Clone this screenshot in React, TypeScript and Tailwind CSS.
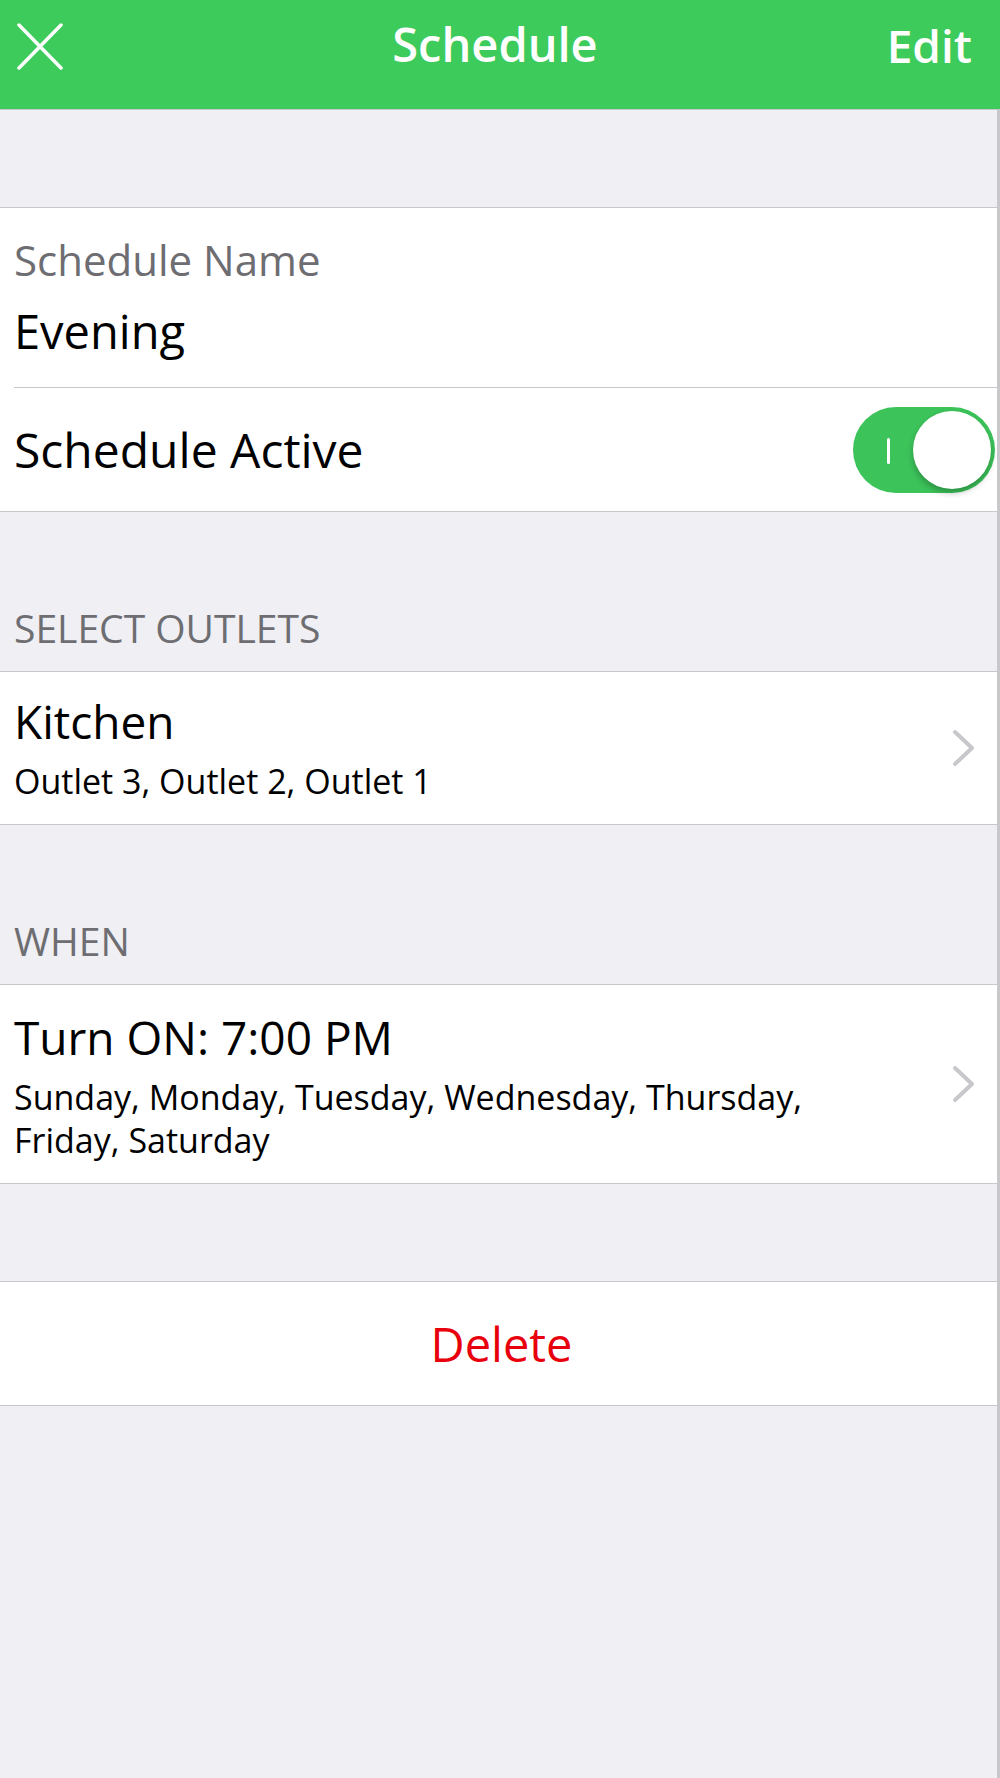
const font = { fontFamily: '"Open Sans", "Noto Sans", sans-serif' };

function Chevron() {
  return (
    <svg width="26" height="38" viewBox="0 0 26 38" className="shrink-0">
      <path d="M4 3 L21 19 L4 35" fill="none" stroke="#c7c7cc" strokeWidth="4" strokeLinecap="round" strokeLinejoin="round" />
    </svg>
  );
}

function Toggle() {
  return (
    <div className="relative h-[86px] w-[142px] rounded-full bg-[#3cc35a]">
      <span className="absolute left-[34px] top-[31px] h-[26px] w-[3px] rounded-full bg-white" />
      <span className="absolute right-[4px] top-[4px] h-[78px] w-[78px] rounded-full bg-white shadow-[0_4px_6px_rgba(0,0,0,0.25)]" />
    </div>
  );
}

function SectionHeader({ title }: { title: string }) {
  return (
    <div className="flex h-[159px] items-end px-[14px] pb-[18px]">
      <span className="text-[39px] leading-[50px] text-[#6d6d72]">{title}</span>
    </div>
  );
}

export default function App() {
  return (
    <div className="min-h-[1778px] w-[1000px] bg-[#efeff4]" style={font}>
      {/* Nav bar */}
      <header className="relative flex h-[110px] items-start border-b border-[#c8c7cc] bg-[#3dcb5c] px-[17px] pt-[17px] text-white">
        <svg width="46" height="47" viewBox="0 0 46 47" className="mt-[6px]">
          <path d="M2 2 L44 45 M44 2 L2 45" stroke="white" strokeWidth="3.5" strokeLinecap="round" />
        </svg>
        <span className="absolute left-0 right-0 top-[16px] pr-[10px] text-center text-[47px] font-semibold leading-[56px]">
          Schedule
        </span>
        <span className="ml-auto pr-[11px] text-[46px] font-semibold leading-[56px]">Edit</span>
      </header>

      <div className="min-h-[1668px] border-r-[3px] border-[#c8c8cb]">
        <div className="h-[97px]" />

        {/* Name + active */}
        <section className="border-y border-[#c8c7cc] bg-white">
          <div className="px-[14px] pb-[28px] pt-[27px]">
            <div className="text-[42px] leading-[50px] text-[#6d6d72]">Schedule Name</div>
            <div className="mt-[18px] text-[47px] leading-[56px] text-black">Evening</div>
          </div>
          <div className="ml-[14px] h-px bg-[#c8c7cc]" />
          <div className="flex h-[123px] items-center justify-between pl-[14px] pr-[2px]">
            <span className="text-[48px] leading-[56px] text-black">Schedule Active</span>
            <Toggle />
          </div>
        </section>

        <SectionHeader title="SELECT OUTLETS" />

        <section className="border-y border-[#c8c7cc] bg-white">
          <div className="flex h-[152px] items-center justify-between pl-[14px] pr-[20px]">
            <div>
              <div className="text-[46px] leading-[56px] text-black">Kitchen</div>
              <div className="mt-[10px] text-[34px] leading-[44px] text-black">Outlet 3, Outlet 2, Outlet 1</div>
            </div>
            <Chevron />
          </div>
        </section>

        <SectionHeader title="WHEN" />

        <section className="border-y border-[#c8c7cc] bg-white">
          <div className="flex h-[198px] items-center justify-between pl-[14px] pr-[20px]">
            <div className="w-[830px] pt-[2px]">
              <div className="text-[46px] leading-[56px] text-black">Turn ON: 7:00 PM</div>
              <div className="mt-[11px] text-[34px] leading-[43px] text-black">
                Sunday, Monday, Tuesday, Wednesday, Thursday, Friday, Saturday
              </div>
            </div>
            <Chevron />
          </div>
        </section>

        <div className="h-[97px]" />

        <section className="border-y border-[#c8c7cc] bg-white">
          <div className="flex h-[123px] items-center justify-center pl-[6px]">
            <span className="text-[47px] leading-[56px] text-[#e8000d]">Delete</span>
          </div>
        </section>
      </div>
    </div>
  );
}
